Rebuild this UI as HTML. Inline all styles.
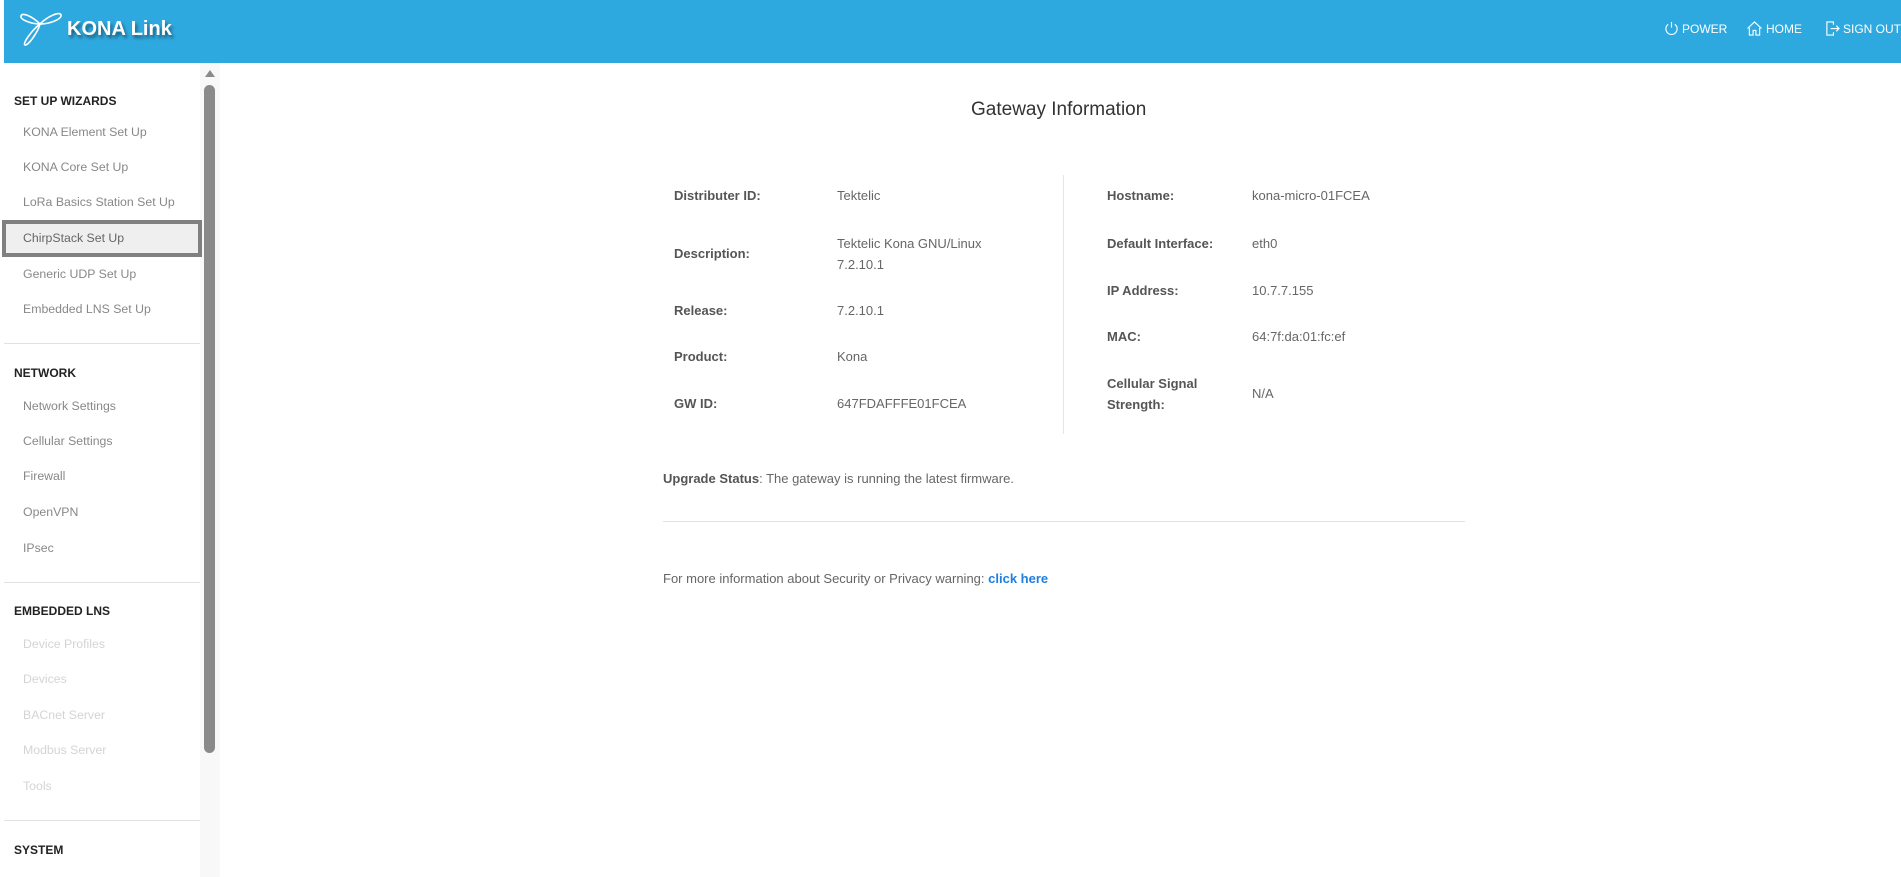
<!DOCTYPE html>
<html><head><meta charset="utf-8">
<style>
*{margin:0;padding:0;box-sizing:border-box}
body{width:1901px;height:877px;overflow:hidden;background:#fff;font-family:"Liberation Sans",sans-serif;position:relative}
.a{position:absolute;white-space:nowrap}
#hdr{position:absolute;left:4px;top:0;width:1897px;height:63px;background:#2ea9df}
.nav{position:absolute;top:21px;color:#fff;font-size:12px;display:flex;align-items:center;gap:3px;white-space:nowrap}
.h{position:absolute;left:14px;font-size:12px;font-weight:bold;color:#222;white-space:nowrap}
.i{position:absolute;left:23px;font-size:12.3px;color:#888;white-space:nowrap}
.d{color:#d4d4d4}
.hr{position:absolute;left:4px;width:196px;height:1px;background:#e2e2e2}
.lb{position:absolute;font-size:13px;font-weight:bold;color:#555;line-height:24px;white-space:nowrap}
.v{position:absolute;font-size:13px;color:#666;line-height:24px;white-space:nowrap}
</style></head><body>
<div id="hdr"></div>
<svg class="a" style="left:18px;top:8px" width="46" height="40" viewBox="0 0 46 40" fill="none" stroke="#fff" stroke-width="1.6">
<path d="M22 16 C14 8 4 4 3 8 C2 12 14 16 22 16 Z"/>
<path d="M22 16 C30 8 42 3 43 7 C44 11 32 16 22 16 Z"/>
<path d="M22 16 C20 24 10 38 7 37 C4 36 14 22 22 16 Z"/>
</svg>
<div class="a" style="left:67px;top:18px;font-size:20px;font-weight:bold;color:#fff;text-shadow:2px 3px 3px rgba(0,0,0,.45)">KONA Link</div>
<div class="nav" style="left:1664px"><svg width="15" height="15" viewBox="0 0 16 16" fill="none" stroke="#fff" stroke-width="1.2"><path d="M4.5 3.5A6 6 0 1 0 11.5 3.5"/><path d="M8 1v6"/></svg>POWER</div>
<div class="nav" style="left:1746px"><svg width="17" height="15" viewBox="0 0 17 16" fill="none" stroke="#fff" stroke-width="1.2"><path d="M1 8L8.5 1 16 8"/><path d="M3 7v8h4v-5h3v5h4V7"/></svg>HOME</div>
<div class="nav" style="left:1825px"><svg width="15" height="15" viewBox="0 0 16 16" fill="none" stroke="#fff" stroke-width="1.2"><path d="M9 4V1H2v14h7v-3"/><path d="M6 8h9M12 5l3 3-3 3"/></svg>SIGN OUT</div>

<div class="a" style="left:200px;top:63px;width:20px;height:814px;background:#f8f8f8"></div>
<div class="a" style="left:205px;top:70px;width:0;height:0;border-left:5px solid transparent;border-right:5px solid transparent;border-bottom:7px solid #8a8a8a"></div>
<div class="a" style="left:204px;top:85px;width:11px;height:668px;background:#8a8a8a;border-radius:6px"></div>

<div class="h" style="top:94px">SET UP WIZARDS</div>
<div class="i" style="top:125px">KONA Element Set Up</div>
<div class="i" style="top:160px">KONA Core Set Up</div>
<div class="i" style="top:195px">LoRa Basics Station Set Up</div>
<div class="a" style="left:2px;top:220px;width:200px;height:37px;border:4px solid #808080;background:#efefef"></div>
<div class="i" style="top:231px;color:#666">ChirpStack Set Up</div>
<div class="i" style="top:267px">Generic UDP Set Up</div>
<div class="i" style="top:302px">Embedded LNS Set Up</div>
<div class="hr" style="top:343px"></div>
<div class="h" style="top:366px">NETWORK</div>
<div class="i" style="top:399px">Network Settings</div>
<div class="i" style="top:434px">Cellular Settings</div>
<div class="i" style="top:469px">Firewall</div>
<div class="i" style="top:505px">OpenVPN</div>
<div class="i" style="top:541px">IPsec</div>
<div class="hr" style="top:582px"></div>
<div class="h" style="top:604px">EMBEDDED LNS</div>
<div class="i d" style="top:637px">Device Profiles</div>
<div class="i d" style="top:672px">Devices</div>
<div class="i d" style="top:708px">BACnet Server</div>
<div class="i d" style="top:743px">Modbus Server</div>
<div class="i d" style="top:779px">Tools</div>
<div class="hr" style="top:820px"></div>
<div class="h" style="top:843px">SYSTEM</div>

<div class="a" style="left:971px;top:99px;font-size:19px;color:#333">Gateway Information</div>

<div class="a" style="left:1063px;top:175px;width:1px;height:259px;background:#e6e6e6"></div>

<div class="lb" style="left:674px;top:184px">Distributer ID:</div>
<div class="v" style="left:837px;top:184px">Tektelic</div>
<div class="lb" style="left:674px;top:242px">Description:</div>
<div class="v" style="left:837px;top:233px;line-height:21px">Tektelic Kona GNU/Linux<br>7.2.10.1</div>
<div class="lb" style="left:674px;top:299px">Release:</div>
<div class="v" style="left:837px;top:299px">7.2.10.1</div>
<div class="lb" style="left:674px;top:345px">Product:</div>
<div class="v" style="left:837px;top:345px">Kona</div>
<div class="lb" style="left:674px;top:392px">GW ID:</div>
<div class="v" style="left:837px;top:392px">647FDAFFFE01FCEA</div>

<div class="lb" style="left:1107px;top:184px">Hostname:</div>
<div class="v" style="left:1252px;top:184px">kona-micro-01FCEA</div>
<div class="lb" style="left:1107px;top:232px">Default Interface:</div>
<div class="v" style="left:1252px;top:232px">eth0</div>
<div class="lb" style="left:1107px;top:279px">IP Address:</div>
<div class="v" style="left:1252px;top:279px">10.7.7.155</div>
<div class="lb" style="left:1107px;top:325px">MAC:</div>
<div class="v" style="left:1252px;top:325px">64:7f:da:01:fc:ef</div>
<div class="lb" style="left:1107px;top:373px;line-height:21px">Cellular Signal<br>Strength:</div>
<div class="v" style="left:1252px;top:382px">N/A</div>

<div class="v" style="left:663px;top:467px"><b style="color:#555">Upgrade Status</b>: The gateway is running the latest firmware.</div>
<div class="a" style="left:663px;top:521px;width:802px;height:1px;background:#e2e2e2"></div>
<div class="v" style="left:663px;top:567px">For more information about Security or Privacy warning: <b style="color:#1e7fe0">click here</b></div>
</body></html>
